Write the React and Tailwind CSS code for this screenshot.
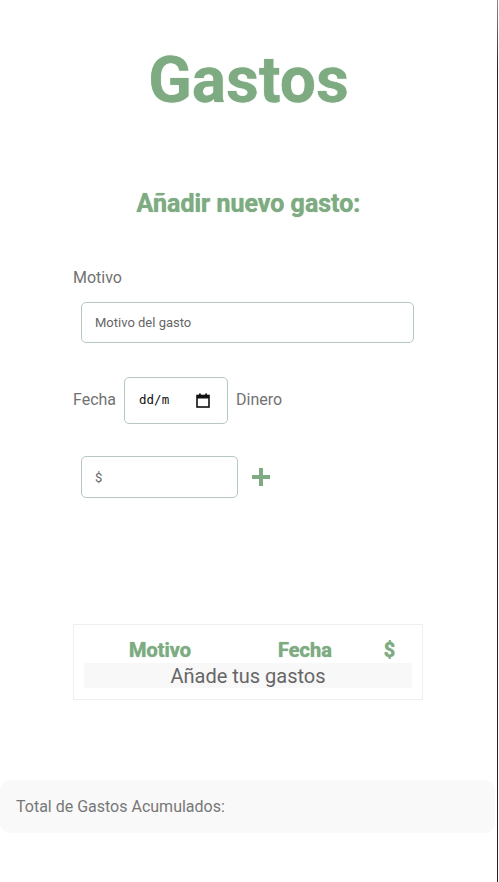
import React from "react";

const green = "text-[#7fab82]";

const CalendarIcon = () => (
    <svg width="14" height="15" viewBox="0 0 14 15" className="shrink-0">
        <rect x="1" y="2.5" width="12" height="11.5" fill="none" stroke="#111" strokeWidth="1.6" />
        <rect x="1" y="2.5" width="12" height="3" fill="#111" />
        <rect x="3" y="0.5" width="1.8" height="3" fill="#111" />
        <rect x="9.2" y="0.5" width="1.8" height="3" fill="#111" />
    </svg>
);

const PlusIcon = () => (
    <svg width="18" height="18" viewBox="0 0 18 18">
        <rect x="7" y="0" width="4" height="18" fill="#7fab82" />
        <rect x="0" y="7" width="18" height="4" fill="#7fab82" />
    </svg>
);

export default function App() {
    return (
        <div className="flex min-h-[882px] bg-white font-['Roboto','Liberation_Sans',sans-serif]">
            <div className="flex w-[497px] flex-col">
                {/* Title */}
                <h1 className={`mt-[49px] text-center text-[64px] font-bold leading-none ${green} [text-shadow:0_0_1px_#7fab82]`}>
                    Gastos
                </h1>
                <h2 className={`mt-[78px] text-center text-[25px] font-bold leading-none ${green} [text-shadow:0_0_1px_#7fab82]`}>
                    Añadir nuevo gasto:
                </h2>

                {/* Form */}
                <form className="flex flex-col px-[73px]" onSubmit={(e) => e.preventDefault()}>
                    <label className="mt-[54px] text-[16px] leading-none text-[#727272]">Motivo</label>
                    <input
                        type="text"
                        placeholder="Motivo del gasto"
                        className="ml-2 mt-[16px] h-[41px] w-[333px] rounded-[5px] border border-[#b7c7c2] px-[13px] text-[13px] text-[#444] outline-none placeholder:text-[#666]"
                    />

                    <div className="mt-[33px] flex h-[47px] items-center gap-2 pt-px text-[16px] text-[#727272]">
                        <span>Fecha</span>
                        <div className="flex h-[47px] w-[104px] items-center justify-between rounded-[5px] border border-[#b7c7c2] pl-[14px] pr-[17px]">
                            <span className="font-['DejaVu_Sans_Mono',monospace] text-[12.5px] text-[#111]">dd/m</span>
                            <CalendarIcon />
                        </div>
                        <span>Dinero</span>
                    </div>

                    <div className="mt-[33px] flex items-center gap-[14px]">
                        <input
                            type="text"
                            placeholder="$"
                            className="ml-2 h-[42px] w-[157px] rounded-[5px] border border-[#b7c7c2] px-[13px] text-[13px] text-[#444] outline-none placeholder:text-[#666]"
                        />
                        <button type="button" className="flex items-center">
                            <PlusIcon />
                        </button>
                    </div>
                </form>

                {/* Table */}
                <div className="mx-[73px] mt-[126px] w-[350px] border border-[#efefef] px-[10px] pb-[11px] pt-[10px]">
                    <div className={`grid h-[28px] grid-cols-[152px_138px_37px] items-center pb-[2px] text-center text-[20px] font-bold ${green} [text-shadow:0_0_1px_#7fab82]`}>
                        <span>Motivo</span>
                        <span>Fecha</span>
                        <span className="pr-[6px]">$</span>
                    </div>
                    <div className="flex h-[25px] items-center justify-center bg-[#f8f8f8] text-[20px] text-[#666]">
                        Añade tus gastos
                    </div>
                </div>

                {/* Footer */}
                <div className="mr-[2px] mt-[80px] flex h-[53px] items-center rounded-[10px] bg-[#f9f9f9] px-4 text-[16px] text-[#777]">
                    Total de Gastos Acumulados:
                </div>
            </div>
            <div className="w-px bg-[linear-gradient(#8c8c8c,#222_70px)]" />
            <div className="w-px bg-white" />
        </div>
    );
}
